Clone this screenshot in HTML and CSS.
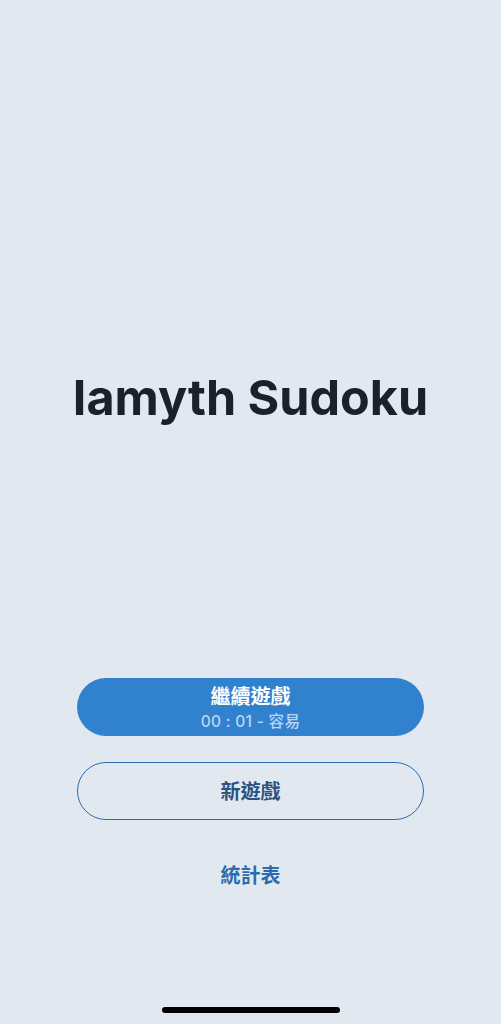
FILE: index.html
```html
<!DOCTYPE html>
<html lang="zh-Hant">
<head>
<meta charset="utf-8">
<meta name="viewport" content="width=device-width, initial-scale=1">
<title>Iamyth Sudoku</title>
<link rel="stylesheet" href="styles.css">
</head>
<body>
<div class="screen">
  <header class="hero">
    <h1 class="title">Iamyth Sudoku</h1>
  </header>
  <nav class="actions">
    <button class="btn btn-solid">
      <span class="btn-label">繼續遊戲</span>
      <span class="btn-sub">00 : 01 - 容易</span>
    </button>
    <button class="btn btn-outline">
      <span class="btn-label">新遊戲</span>
    </button>
    <button class="btn btn-ghost">
      <span class="btn-label">統計表</span>
    </button>
  </nav>
  <div class="home-indicator"></div>
</div>
</body>
</html>
```

FILE: styles.css
```css
* { box-sizing: border-box; }
html, body {
  margin: 0;
  padding: 0;
  background: #e2e8f0;
}
body {
  font-family: Inter, "Noto Sans CJK TC", "Noto Sans", sans-serif;
}
.screen {
  position: relative;
  width: 501px;
  height: 1024px;
  display: flex;
  flex-direction: column;
  align-items: center;
}
.hero {
  padding-top: 368px;
  height: 430px;
}
.title {
  margin: 0;
  font-size: 48.5px;
  line-height: 60px;
  font-weight: 700;
  color: #1a202c;
  text-align: center;
}
.actions {
  margin-top: 248px;
  width: 347px;
  display: flex;
  flex-direction: column;
  gap: 26px;
}
.btn {
  height: 58px;
  width: 100%;
  border-radius: 29px;
  display: flex;
  flex-direction: column;
  align-items: center;
  justify-content: center;
  font-family: "Noto Sans CJK TC", "Noto Sans", sans-serif;
  border: none;
  background: transparent;
  padding: 0;
}
.btn-label {
  font-size: 20px;
  line-height: 26px;
  font-weight: 700;
}
.btn-sub {
  font-family: Inter, "Noto Sans CJK TC", sans-serif;
  font-size: 15.5px;
  line-height: 20px;
  font-weight: 500;
  color: #bcd6f2;
  letter-spacing: 0.3px;
  margin-top: 3px;
}
.btn-solid {
  background: #3182ce;
  color: #ffffff;
}
.btn-outline {
  border: 1.5px solid #2b6cb0;
  color: #2c5282;
}
.btn-ghost {
  color: #2b6cb0;
}
.home-indicator {
  position: absolute;
  bottom: 11px;
  left: 50%;
  transform: translateX(-50%);
  width: 178px;
  height: 6px;
  border-radius: 3px;
  background: #000000;
}
```
